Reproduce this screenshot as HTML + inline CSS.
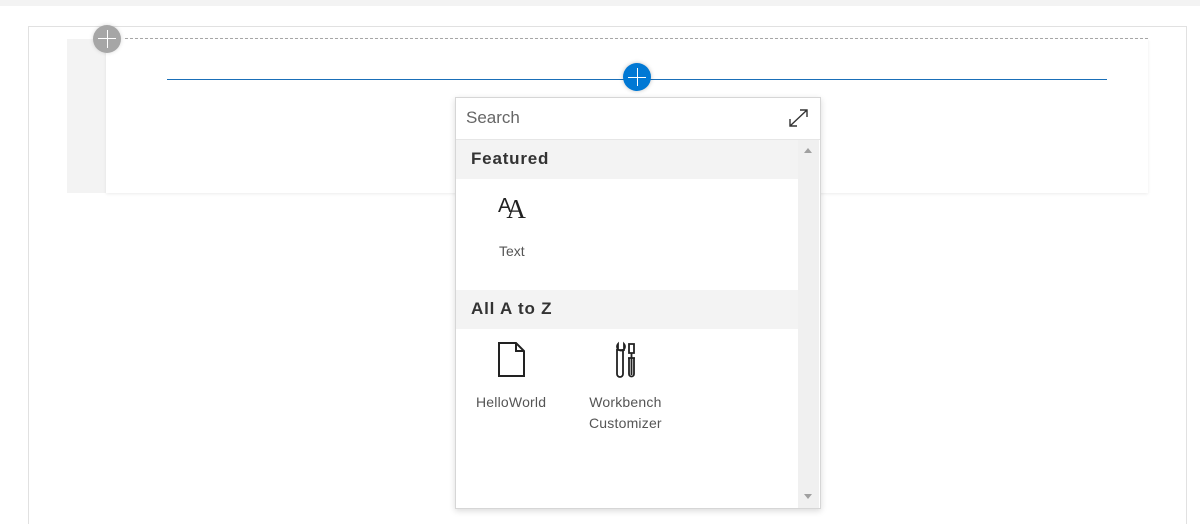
<!DOCTYPE html>
<html><head><style>
html,body{margin:0;width:1200px;height:524px;background:#fff;overflow:hidden;}
body{position:relative;font-family:"Segoe UI","Liberation Sans",sans-serif;}
.a{position:absolute;}
</style></head><body>
<div class="a" style="left:0;top:0;width:1200px;height:6px;background:#f3f3f3"></div>
<div class="a" style="left:28px;top:26px;width:1157px;height:497px;border:1px solid #e1e1e1;border-bottom:none"></div>
<div class="a" style="left:67px;top:39px;width:40px;height:154px;background:#f3f3f3"></div>
<div class="a" style="left:106px;top:39px;width:1042px;height:154px;background:#fff;box-shadow:0 1px 3px rgba(0,0,0,.08)"></div>
<div class="a" style="left:125px;top:38px;width:1023px;border-top:1px dashed #a6a6a6"></div>
<div class="a" style="left:93px;top:25px;width:28px;height:28px;border-radius:50%;background:#a6a6a6;box-shadow:0 0 4px rgba(0,0,0,.15)"></div>
<div class="a" style="left:98px;top:38px;width:18px;height:1px;background:#fff"></div>
<div class="a" style="left:107px;top:30px;width:1px;height:18px;background:#fff"></div>
<div class="a" style="left:167px;top:79px;width:940px;height:1px;background:#1a6fb8"></div>
<div class="a" style="left:623px;top:63px;width:28px;height:28px;border-radius:50%;background:#0078d4;box-shadow:0 0 4px rgba(0,0,0,.25)"></div>
<div class="a" style="left:628px;top:77px;width:18px;height:1px;background:#fff"></div>
<div class="a" style="left:637px;top:68px;width:1px;height:18px;background:#fff"></div>
<div class="a" style="left:455px;top:97px;width:364px;height:410px;background:#fff;border:1px solid #d6d6d6;box-shadow:0 2px 6px rgba(0,0,0,.15)">
 <div class="a" style="left:10px;top:10px;font-size:17px;color:#666">Search</div>
 <svg class="a" style="left:332px;top:10px" width="22" height="20" viewBox="0 0 22 20"><path d="M2 18L19 2M12 2h7v7M2 11v7h7" fill="none" stroke="#333" stroke-width="1.4"/></svg>
 <div class="a" style="left:0;top:41px;width:364px;height:1px;background:#e6e6e6"></div>
 <div class="a" style="left:342px;top:42px;width:21px;height:368px;background:#f0f0f0"></div>
 <div class="a" style="left:348px;top:50px;border:4px solid transparent;border-bottom:5px solid #a0a0a0;border-top:0"></div>
 <div class="a" style="left:348px;top:396px;border:4px solid transparent;border-top:5px solid #a0a0a0;border-bottom:0"></div>
 <div class="a" style="left:0;top:42px;width:342px;height:39px;background:#f3f3f3"></div>
 <div class="a" style="left:15px;top:51px;font-size:17px;font-weight:bold;color:#333;letter-spacing:.8px">Featured</div>
 <div class="a" style="left:42px;top:96px;font-family:'Liberation Sans',sans-serif;color:#222"><span style="font-size:20px;position:relative;top:-6px">A</span><span style="font-family:'Liberation Serif',serif;font-size:27px;margin-left:-5px">A</span></div>
 <div class="a" style="left:43px;top:145px;font-size:14px;color:#555">Text</div>
 <div class="a" style="left:0;top:192px;width:342px;height:39px;background:#f3f3f3"></div>
 <div class="a" style="left:15px;top:201px;font-size:17px;font-weight:bold;color:#333;letter-spacing:.8px">All A to Z</div>
 <svg class="a" style="left:40px;top:243px" width="32" height="38" viewBox="0 0 32 38"><path d="M3 2h17l8 8v25H3z M20 2v8h8" fill="none" stroke="#222" stroke-width="2"/></svg>
 <svg class="a" style="left:156px;top:243px" width="28" height="38" viewBox="0 0 28 38"><path d="M6 3a4 4 0 1 0 6 0v6h-6zM5 8v25a3 3 0 0 0 6 0V8M17 3h5v9h-5zM19.5 12v22M16 17h7M17 17v16a2.5 2.5 0 0 0 5 0V17" fill="none" stroke="#222" stroke-width="1.8"/></svg>
 <div class="a" style="left:20px;top:296px;font-size:14px;color:#555;letter-spacing:.2px">HelloWorld</div>
 <div class="a" style="left:133px;top:294px;font-size:14px;color:#555;text-align:center;line-height:21px;letter-spacing:.2px">Workbench<br>Customizer</div>
</div>
</body></html>
